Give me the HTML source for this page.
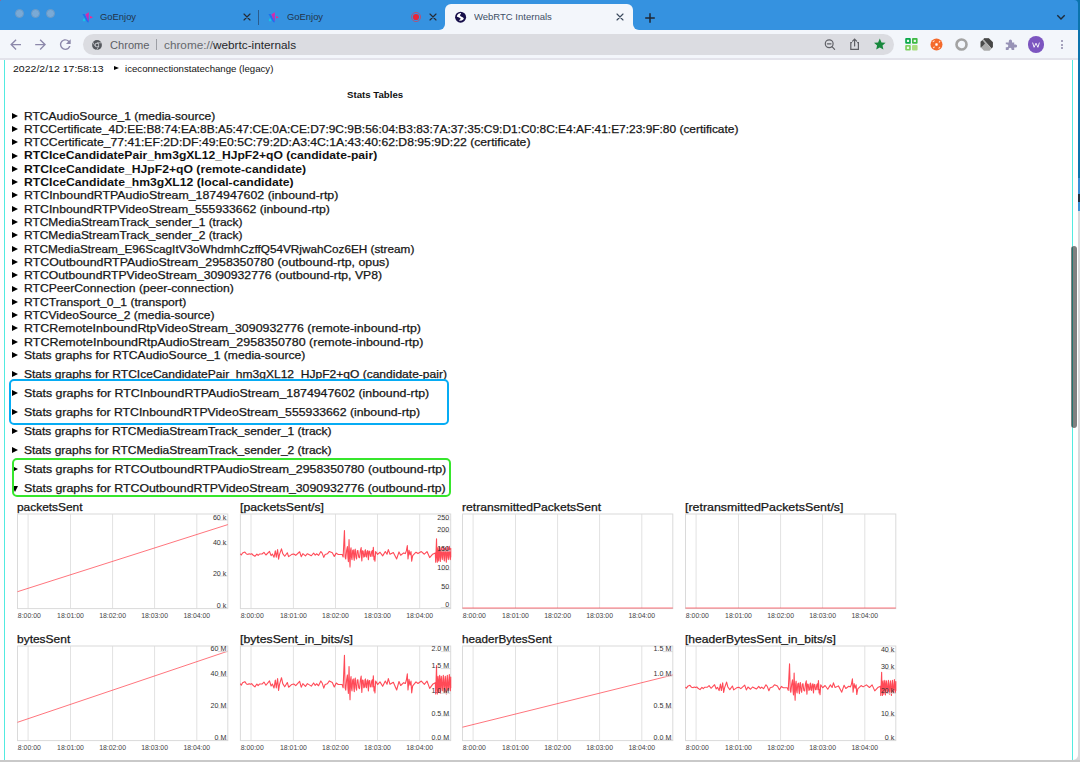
<!DOCTYPE html><html><head><meta charset="utf-8"><style>
html,body{margin:0;padding:0;width:1080px;height:762px;overflow:hidden;background:#dcdcdc;font-family:'Liberation Sans', sans-serif;}
#win{position:absolute;left:0;top:0;width:1078px;height:760px;overflow:hidden;background:transparent;border-radius:0 4px 5px 0;}
.ls{-webkit-text-stroke:0.25px #222;}
.tri{position:absolute;width:0;height:0;border-top:3.5px solid transparent;border-bottom:3.5px solid transparent;border-left:6.3px solid #000;}
</style></head><body>
<div style="position:absolute;left:1068px;top:0;width:12px;height:178px;background:#0b74ad"></div>
<div style="position:absolute;left:1076px;top:178px;width:4px;height:33px;background:#3a8ed6"></div>
<div style="position:absolute;left:1078px;top:194px;width:2px;height:8px;background:#23303f"></div>
<div style="position:absolute;left:1076px;top:211px;width:4px;height:551px;background:#d9d9db"></div>
<div style="position:absolute;left:0;top:760px;width:1080px;height:2px;background:#c9c9c9"></div>
<div id="win">
<div style="position:absolute;left:0;top:40px;width:1078px;height:720px;background:#fff"></div>
<div style="position:absolute;left:0;top:0;width:1078px;height:30px;background:#3592e0"></div>
<div style="position:absolute;left:0;top:0;width:1px;height:1px;background:#8a6a9a"></div>
<div style="position:absolute;left:14.9px;top:9.3px;width:9px;height:9px;box-sizing:border-box;border:0.6px solid #6e9ac4;border-radius:50%;background:#7aaad6"></div>
<div style="position:absolute;left:30.5px;top:9.3px;width:9px;height:9px;box-sizing:border-box;border:0.6px solid #6e9ac4;border-radius:50%;background:#7aaad6"></div>
<div style="position:absolute;left:46.1px;top:9.3px;width:9px;height:9px;box-sizing:border-box;border:0.6px solid #6e9ac4;border-radius:50%;background:#7aaad6"></div>
<div style="position:absolute;left:445px;top:4px;width:188px;height:27px;background:#f3f6fb;border-radius:6px 6px 0 0"></div>
<div style="position:absolute;left:439px;top:24px;width:6px;height:6px;background:#f3f6fb"></div>
<div style="position:absolute;left:433px;top:18px;width:12px;height:12px;border-radius:50%;background:#3592e0;clip-path:inset(6px 0 0 6px)"></div>
<div style="position:absolute;left:633px;top:24px;width:6px;height:6px;background:#f3f6fb"></div>
<div style="position:absolute;left:633px;top:18px;width:12px;height:12px;border-radius:50%;background:#3592e0;clip-path:inset(6px 6px 0 0)"></div>
<svg style="position:absolute;left:81.5px;top:12px" width="12" height="11" viewBox="0 0 12 11"><defs><linearGradient id="gm81" x1="0" y1="0" x2="0" y2="1"><stop offset="0" stop-color="#ff1a9a"/><stop offset="1" stop-color="#6a4ae0"/></linearGradient></defs><path d="M0.4 1.9L2.6 1.9L7 10.2L5.2 10.2Z" fill="#1a73f0"/><path d="M1.4 6.6L2.6 6.6L3.4 8.4L2 9.4L0.8 8.6Z" fill="#12c8e8"/><path d="M3.4 2.4L6.8 0.2L6.8 10L5.4 8Z" fill="url(#gm81)"/><path d="M8 4L8 6.6L11 5.3Z" fill="#ff1f8a"/></svg>
<div class="" style="position:absolute;left:100.00px;top:11.82px;font-size:9.8px;line-height:9.8px;font-weight:400;color:#22324a;white-space:nowrap;transform:scaleX(0.96);transform-origin:0 0;">GoEnjoy</div>
<svg style="position:absolute;left:241.5px;top:12px" width="10" height="10" viewBox="-5 -5 10 10"><path d="M-3.0 -3.0L3.0 3.0M3.0 -3.0L-3.0 3.0" stroke="#262a33" stroke-width="1.15" stroke-linecap="round"/></svg>
<div style="position:absolute;left:258px;top:10px;width:1px;height:15px;background:#2a5c8e"></div>
<svg style="position:absolute;left:268px;top:12px" width="12" height="11" viewBox="0 0 12 11"><defs><linearGradient id="gm268" x1="0" y1="0" x2="0" y2="1"><stop offset="0" stop-color="#ff1a9a"/><stop offset="1" stop-color="#6a4ae0"/></linearGradient></defs><path d="M0.4 1.9L2.6 1.9L7 10.2L5.2 10.2Z" fill="#1a73f0"/><path d="M1.4 6.6L2.6 6.6L3.4 8.4L2 9.4L0.8 8.6Z" fill="#12c8e8"/><path d="M3.4 2.4L6.8 0.2L6.8 10L5.4 8Z" fill="url(#gm268)"/><path d="M8 4L8 6.6L11 5.3Z" fill="#ff1f8a"/></svg>
<div class="" style="position:absolute;left:287.00px;top:11.82px;font-size:9.8px;line-height:9.8px;font-weight:400;color:#22324a;white-space:nowrap;transform:scaleX(0.96);transform-origin:0 0;">GoEnjoy</div>
<svg style="position:absolute;left:410px;top:11px" width="12" height="12" viewBox="0 0 12 12"><circle cx="6" cy="6" r="4.6" fill="none" stroke="#e8364a" stroke-width="0.8" opacity=".8"/><circle cx="6" cy="6" r="3.1" fill="#e8263a"/></svg>
<svg style="position:absolute;left:428.2px;top:12px" width="10" height="10" viewBox="-5 -5 10 10"><path d="M-3.0 -3.0L3.0 3.0M3.0 -3.0L-3.0 3.0" stroke="#262a33" stroke-width="1.15" stroke-linecap="round"/></svg>
<svg style="position:absolute;left:453px;top:10px" width="15" height="14" viewBox="0 0 15 14"><circle cx="7.6" cy="7.2" r="5.5" fill="#170f4a"/><path d="M3.86 6.07C4.2 5.3 4.78 4.6 4.78 4.6C5.3 4 6.07 3.58 6.07 3.58L7.9 3.12L8.09 3.68L7.17 4.78L6.99 5.51L7.9 6.43L9.19 6.99L10.29 7.72L10.85 8.46L10.29 9.56L8.82 10.48L6.62 10.85L6.07 10.29L7.35 9.37L7.72 8.64L6.99 7.9L5.51 7.35L4.04 6.8Z" fill="#fff"/></svg>
<div class="" style="position:absolute;left:473.50px;top:11.82px;font-size:9.8px;line-height:9.8px;font-weight:400;color:#3d4f66;white-space:nowrap;transform:scaleX(0.97);transform-origin:0 0;">WebRTC Internals</div>
<svg style="position:absolute;left:615.2px;top:12px" width="10" height="10" viewBox="-5 -5 10 10"><path d="M-3.0 -3.0L3.0 3.0M3.0 -3.0L-3.0 3.0" stroke="#3b4a5e" stroke-width="1.15" stroke-linecap="round"/></svg>
<svg style="position:absolute;left:644px;top:11.5px" width="12" height="12" viewBox="0 0 12 12"><path d="M6 1.2V10.8M1.2 6H10.8" stroke="#1f2733" stroke-width="1.5"/></svg>
<svg style="position:absolute;left:1055px;top:12px" width="12" height="10" viewBox="0 0 12 10"><path d="M2.3 3.3L6 7L9.7 3.3" fill="none" stroke="#1f2a38" stroke-width="1.4"/></svg>
<div style="position:absolute;left:0;top:30px;width:1078px;height:28px;background:#f3f6fb"></div>
<div style="position:absolute;left:0;top:58px;width:1078px;height:2px;background:#e3e3eb"></div>
<svg style="position:absolute;left:0;top:30px" width="80" height="28"><g fill="#8c88aa"><path transform="translate(7.5,6.5) scale(0.675)" d="M20 11H7.83l5.59-5.59L12 4l-8 8 8 8 1.41-1.41L7.83 13H20v-2z"/><path transform="translate(32.5,6.5) scale(0.675)" d="M12 4l-1.41 1.41L16.17 11H4v2h12.17l-5.58 5.59L12 20l8-8z"/><path transform="translate(57.2,6.5) scale(0.675)" d="M17.65 6.35A7.958 7.958 0 0 0 12 4c-4.42 0-7.99 3.58-7.99 8s3.57 8 7.99 8c3.730 0 6.84-2.55 7.73-6h-2.08A5.990 5.990 0 0 1 12 18c-3.31 0-6-2.69-6-6s2.69-6 6-6c1.66 0 3.14.69 4.22 1.78L13 11h7V4l-2.35 2.35z"/></g></svg>
<div style="position:absolute;left:83.3px;top:33.8px;width:810.5px;height:21.4px;border-radius:10.7px;background:#dbdce1"></div>
<svg style="position:absolute;left:92px;top:39.6px" width="10" height="10" viewBox="0 0 10 10"><circle cx="5" cy="5" r="4.9" fill="#55585e"/><circle cx="5" cy="5" r="2.2" fill="#dbdce1"/><circle cx="5" cy="5" r="1.5" fill="#55585e"/><path d="M5 2.8H9.6M3.1 6.1L0.8 2.2M6.9 6.1L4.6 10" stroke="#dbdce1" stroke-width="0.7"/></svg>
<div class="" style="position:absolute;left:109.80px;top:40.18px;font-size:10.9px;line-height:10.9px;font-weight:400;color:#5d6066;white-space:nowrap;transform:scaleX(1.02);transform-origin:0 0;">Chrome</div>
<div style="position:absolute;left:155.6px;top:38.7px;width:1px;height:11.6px;background:#9c9ea4"></div>
<div class="" style="position:absolute;left:163.90px;top:40.18px;font-size:10.9px;line-height:10.9px;font-weight:400;color:#000;white-space:nowrap;transform:scaleX(1.08);transform-origin:0 0;"><span style="color:#65686e">chrome://</span><span style="color:#25272b">webrtc-internals</span></div>
<svg style="position:absolute;left:822px;top:37px" width="70" height="16" viewBox="0 0 70 16" fill="none" stroke="#5f6066" stroke-width="1.2" stroke-linecap="round"><circle cx="7.2" cy="6.8" r="3.9"/><path d="M10 9.7L12.6 12.3M5.4 6.8H9"/><path d="M29.6 5.6H28.8V12.4H36.4V5.6H35.6M32.6 2.2V9M30.6 4.2L32.6 2.2L34.6 4.2"/></svg>
<svg style="position:absolute;left:873px;top:38px" width="14" height="13" viewBox="0 0 14 13"><path d="M6.8 0.6L8.5 4.4L12.6 4.7L9.5 7.4L10.4 11.6L6.8 9.4L3.2 11.6L4.1 7.4L1 4.7L5.1 4.4Z" fill="#18883d"/></svg>
<svg style="position:absolute;left:904.5px;top:38px" width="13" height="13" viewBox="0 0 13 13"><rect x="0.2" y="0.1" width="5.6" height="5.6" rx="1" fill="#0aa84a"/><rect x="1.9" y="1.8" width="2.2" height="2.2" fill="#eef8f0"/><path d="M5.8 5.7L6.6 6.6L4.6 5.7Z" fill="#0aa84a"/><rect x="7" y="0.1" width="5.6" height="5.6" rx="1" fill="#3fba45"/><rect x="8.7" y="1.8" width="2.2" height="2.2" fill="#eef8ee"/><rect x="0.2" y="7" width="5.6" height="5.6" rx="1" fill="#7ccf5e"/><rect x="1.9" y="8.7" width="2.2" height="2.2" fill="#f2faee"/><rect x="7" y="7" width="5.6" height="5.6" rx="1" fill="#a9dd80"/></svg>
<svg style="position:absolute;left:929.7px;top:37.9px" width="13" height="13" viewBox="0 0 13 13"><circle cx="6.5" cy="6.5" r="6" fill="#f46a2c"/><rect x="5.3" y="5.3" width="2.4" height="2.4" rx="0.6" fill="#fff"/><path d="M3.2 3.6L4.2 2.9M9.8 3.3L9.2 4.1M3.5 9.6L4.3 9M9.7 9.4L8.9 10.1" stroke="#fde0d0" stroke-width="1.1" stroke-linecap="round"/></svg>
<svg style="position:absolute;left:954.5px;top:38px" width="13" height="13" viewBox="0 0 13 13"><circle cx="6.5" cy="6.5" r="5" fill="none" stroke="#a3a3a3" stroke-width="2.6"/></svg>
<svg style="position:absolute;left:979.5px;top:38px" width="14" height="13" viewBox="0 0 14 13"><path d="M4.2 0.3H8.8L12.9 4.2V9L9.6 12.7H4L0.6 9.2V3.8Z" fill="#ababab"/><path d="M4.2 0.3H8.8L12.9 4.2V9L11.4 10.6L3.2 1.4Z" fill="#474747"/><path d="M0.6 3.8L2.4 2.2L5 5.6L2.4 8.2L0.6 9.2Z" fill="#4a4a4a"/><path d="M3.2 1.4L11.4 10.6" stroke="#e6e6e6" stroke-width="0.6"/></svg>
<svg style="position:absolute;left:1005px;top:38.8px" width="13" height="12" viewBox="0 0 13 12"><path d="M0.8 3.4H3.8V2A1.6 1.6 0 0 1 7 2V3.4H9.2V5.4H10.6A1.5 1.5 0 0 1 10.6 8.4H9.2V11H6.6V10.2A1.5 1.5 0 0 0 3.6 10.2V11H0.8V8.2H1.8A1.5 1.5 0 0 0 1.8 5.2H0.8Z" fill="#9792b6"/></svg>
<div style="position:absolute;left:1027.5px;top:36px;width:16.8px;height:16.8px;border-radius:50%;background:#7c55c0"></div>
<svg style="position:absolute;left:1032px;top:41.5px" width="8" height="6" viewBox="0 0 8 6"><path d="M0.6 0.6L2.1 5.3L4 1.2L5.9 5.3L7.4 0.6" fill="none" stroke="#fff" stroke-width="0.9" stroke-linejoin="round"/></svg>
<div style="position:absolute;left:1060.5px;top:39.9px;width:2.1px;height:2.1px;border-radius:50%;background:#8c87a8"></div>
<div style="position:absolute;left:1060.5px;top:43.6px;width:2.1px;height:2.1px;border-radius:50%;background:#8c87a8"></div>
<div style="position:absolute;left:1060.5px;top:47.4px;width:2.1px;height:2.1px;border-radius:50%;background:#8c87a8"></div>
<div style="position:absolute;left:4px;top:60px;width:1.2px;height:700px;background:#52ebe0"></div>
<div style="position:absolute;left:1072px;top:60px;width:1.2px;height:700px;background:#52ebe0"></div>
<div style="position:absolute;left:1071px;top:246px;width:5.9px;height:182px;border-radius:3px;background:#808080"></div>
<div style="position:absolute;left:1072px;top:247px;width:1.2px;height:180px;background:#21756f"></div>
<div class="" style="position:absolute;left:13.00px;top:63.62px;font-size:9.8px;line-height:9.8px;font-weight:400;color:#111;white-space:nowrap;transform:scaleX(1.0734693877551018);transform-origin:0 0;">2022/2/12 17:58:13</div>
<div class="tri" style="left:114.2px;top:66.1px;border-top-width:2.8px;border-bottom-width:2.8px;border-left-width:5px"></div>
<div class="" style="position:absolute;left:125.00px;top:63.62px;font-size:9.8px;line-height:9.8px;font-weight:400;color:#111;white-space:nowrap;transform:scaleX(0.9836734693877551);transform-origin:0 0;">iceconnectionstatechange (legacy)</div>
<div class="" style="position:absolute;left:346.70px;top:90.78px;font-size:8.8px;line-height:8.8px;font-weight:700;color:#111;white-space:nowrap;transform:scaleX(1.0977272727272727);transform-origin:0 0;">Stats Tables</div>
<div class="tri" style="left:11.7px;top:112.60px"></div>
<div class="ls" style="position:absolute;left:24.00px;top:110.50px;font-size:11.0px;line-height:11.0px;font-weight:400;color:#111;white-space:nowrap;transform:scaleX(1.0950333422241665);transform-origin:0 0;">RTCAudioSource_1 (media-source)</div>
<div class="tri" style="left:11.7px;top:125.91px"></div>
<div class="ls" style="position:absolute;left:24.00px;top:123.80px;font-size:11.0px;line-height:11.0px;font-weight:400;color:#111;white-space:nowrap;transform:scaleX(1.084233596945089);transform-origin:0 0;">RTCCertificate_4D:EE:B8:74:EA:8B:A5:47:CE:0A:CE:D7:9C:9B:56:04:B3:83:7A:37:35:C9:D1:C0:8C:E4:AF:41:E7:23:9F:80 (certificate)</div>
<div class="tri" style="left:11.7px;top:139.21px"></div>
<div class="ls" style="position:absolute;left:24.00px;top:137.10px;font-size:11.0px;line-height:11.0px;font-weight:400;color:#111;white-space:nowrap;transform:scaleX(1.1078721384115322);transform-origin:0 0;">RTCCertificate_77:41:EF:2D:DF:49:E0:5C:79:2D:A3:4C:1A:43:40:62:D8:95:9D:22 (certificate)</div>
<div class="tri" style="left:11.7px;top:152.51px"></div>
<div class="" style="position:absolute;left:24.00px;top:150.41px;font-size:11.0px;line-height:11.0px;font-weight:700;color:#111;white-space:nowrap;transform:scaleX(1.101567509598136);transform-origin:0 0;">RTCIceCandidatePair_hm3gXL12_HJpF2+qO (candidate-pair)</div>
<div class="tri" style="left:11.7px;top:165.82px"></div>
<div class="" style="position:absolute;left:24.00px;top:163.72px;font-size:11.0px;line-height:11.0px;font-weight:700;color:#111;white-space:nowrap;transform:scaleX(1.107913669064748);transform-origin:0 0;">RTCIceCandidate_HJpF2+qO (remote-candidate)</div>
<div class="tri" style="left:11.7px;top:179.12px"></div>
<div class="" style="position:absolute;left:24.00px;top:177.02px;font-size:11.0px;line-height:11.0px;font-weight:700;color:#111;white-space:nowrap;transform:scaleX(1.1083057589411431);transform-origin:0 0;">RTCIceCandidate_hm3gXL12 (local-candidate)</div>
<div class="tri" style="left:11.7px;top:192.43px"></div>
<div class="ls" style="position:absolute;left:24.00px;top:190.33px;font-size:11.0px;line-height:11.0px;font-weight:400;color:#111;white-space:nowrap;transform:scaleX(1.1223359422034918);transform-origin:0 0;">RTCInboundRTPAudioStream_1874947602 (inbound-rtp)</div>
<div class="tri" style="left:11.7px;top:205.73px"></div>
<div class="ls" style="position:absolute;left:24.00px;top:203.63px;font-size:11.0px;line-height:11.0px;font-weight:400;color:#111;white-space:nowrap;transform:scaleX(1.1138904965680767);transform-origin:0 0;">RTCInboundRTPVideoStream_555933662 (inbound-rtp)</div>
<div class="tri" style="left:11.7px;top:219.04px"></div>
<div class="ls" style="position:absolute;left:24.00px;top:216.94px;font-size:11.0px;line-height:11.0px;font-weight:400;color:#111;white-space:nowrap;transform:scaleX(1.0863636363636362);transform-origin:0 0;">RTCMediaStreamTrack_sender_1 (track)</div>
<div class="tri" style="left:11.7px;top:232.34px"></div>
<div class="ls" style="position:absolute;left:24.00px;top:230.24px;font-size:11.0px;line-height:11.0px;font-weight:400;color:#111;white-space:nowrap;transform:scaleX(1.0863636363636362);transform-origin:0 0;">RTCMediaStreamTrack_sender_2 (track)</div>
<div class="tri" style="left:11.7px;top:245.65px"></div>
<div class="ls" style="position:absolute;left:24.00px;top:243.55px;font-size:11.0px;line-height:11.0px;font-weight:400;color:#111;white-space:nowrap;transform:scaleX(1.0687624331201877);transform-origin:0 0;">RTCMediaStream_E96ScagItV3oWhdmhCzffQ54VRjwahCoz6EH (stream)</div>
<div class="tri" style="left:11.7px;top:258.95px"></div>
<div class="ls" style="position:absolute;left:24.00px;top:256.85px;font-size:11.0px;line-height:11.0px;font-weight:400;color:#111;white-space:nowrap;transform:scaleX(1.123011380181462);transform-origin:0 0;">RTCOutboundRTPAudioStream_2958350780 (outbound-rtp, opus)</div>
<div class="tri" style="left:11.7px;top:272.26px"></div>
<div class="ls" style="position:absolute;left:24.00px;top:270.16px;font-size:11.0px;line-height:11.0px;font-weight:400;color:#111;white-space:nowrap;transform:scaleX(1.1087758102824061);transform-origin:0 0;">RTCOutboundRTPVideoStream_3090932776 (outbound-rtp, VP8)</div>
<div class="tri" style="left:11.7px;top:285.56px"></div>
<div class="ls" style="position:absolute;left:24.00px;top:283.46px;font-size:11.0px;line-height:11.0px;font-weight:400;color:#111;white-space:nowrap;transform:scaleX(1.101202028611632);transform-origin:0 0;">RTCPeerConnection (peer-connection)</div>
<div class="tri" style="left:11.7px;top:298.87px"></div>
<div class="ls" style="position:absolute;left:24.00px;top:296.76px;font-size:11.0px;line-height:11.0px;font-weight:400;color:#111;white-space:nowrap;transform:scaleX(1.101497051655004);transform-origin:0 0;">RTCTransport_0_1 (transport)</div>
<div class="tri" style="left:11.7px;top:312.18px"></div>
<div class="ls" style="position:absolute;left:24.00px;top:310.07px;font-size:11.0px;line-height:11.0px;font-weight:400;color:#111;white-space:nowrap;transform:scaleX(1.0922352040631609);transform-origin:0 0;">RTCVideoSource_2 (media-source)</div>
<div class="tri" style="left:11.7px;top:325.48px"></div>
<div class="ls" style="position:absolute;left:24.00px;top:323.38px;font-size:11.0px;line-height:11.0px;font-weight:400;color:#111;white-space:nowrap;transform:scaleX(1.1262825101407776);transform-origin:0 0;">RTCRemoteInboundRtpVideoStream_3090932776 (remote-inbound-rtp)</div>
<div class="tri" style="left:11.7px;top:338.79px"></div>
<div class="ls" style="position:absolute;left:24.00px;top:336.68px;font-size:11.0px;line-height:11.0px;font-weight:400;color:#111;white-space:nowrap;transform:scaleX(1.1325580681547038);transform-origin:0 0;">RTCRemoteInboundRtpAudioStream_2958350780 (remote-inbound-rtp)</div>
<div class="tri" style="left:11.7px;top:352.09px"></div>
<div class="ls" style="position:absolute;left:24.00px;top:349.99px;font-size:11.0px;line-height:11.0px;font-weight:400;color:#111;white-space:nowrap;transform:scaleX(1.1014661142426678);transform-origin:0 0;">Stats graphs for RTCAudioSource_1 (media-source)</div>
<div class="tri" style="left:11.7px;top:370.60px"></div>
<div class="ls" style="position:absolute;left:24.00px;top:368.50px;font-size:11.0px;line-height:11.0px;font-weight:400;color:#111;white-space:nowrap;transform:scaleX(1.0941625383363853);transform-origin:0 0;">Stats graphs for RTCIceCandidatePair_hm3gXL12_HJpF2+qO (candidate-pair)</div>
<div class="tri" style="left:11.7px;top:389.60px"></div>
<div class="ls" style="position:absolute;left:24.00px;top:387.50px;font-size:11.0px;line-height:11.0px;font-weight:400;color:#111;white-space:nowrap;transform:scaleX(1.1228962502067665);transform-origin:0 0;">Stats graphs for RTCInboundRTPAudioStream_1874947602 (inbound-rtp)</div>
<div class="tri" style="left:11.7px;top:409.10px"></div>
<div class="ls" style="position:absolute;left:24.00px;top:407.00px;font-size:11.0px;line-height:11.0px;font-weight:400;color:#111;white-space:nowrap;transform:scaleX(1.1149143575713625);transform-origin:0 0;">Stats graphs for RTCInboundRTPVideoStream_555933662 (inbound-rtp)</div>
<div class="tri" style="left:11.7px;top:428.10px"></div>
<div class="ls" style="position:absolute;left:24.00px;top:426.00px;font-size:11.0px;line-height:11.0px;font-weight:400;color:#111;white-space:nowrap;transform:scaleX(1.0914305593056894);transform-origin:0 0;">Stats graphs for RTCMediaStreamTrack_sender_1 (track)</div>
<div class="tri" style="left:11.7px;top:447.00px"></div>
<div class="ls" style="position:absolute;left:24.00px;top:444.90px;font-size:11.0px;line-height:11.0px;font-weight:400;color:#111;white-space:nowrap;transform:scaleX(1.0914305593056894);transform-origin:0 0;">Stats graphs for RTCMediaStreamTrack_sender_2 (track)</div>
<div class="tri" style="left:11.7px;top:465.90px"></div>
<div class="ls" style="position:absolute;left:24.00px;top:463.80px;font-size:11.0px;line-height:11.0px;font-weight:400;color:#111;white-space:nowrap;transform:scaleX(1.122593200863679);transform-origin:0 0;">Stats graphs for RTCOutboundRTPAudioStream_2958350780 (outbound-rtp)</div>
<div style="position:absolute;left:11.5px;top:485.50px;width:0;height:0;border-left:3.3px solid transparent;border-right:3.3px solid transparent;border-top:6.5px solid #000"></div>
<div class="ls" style="position:absolute;left:24.00px;top:482.70px;font-size:11.0px;line-height:11.0px;font-weight:400;color:#111;white-space:nowrap;transform:scaleX(1.119465835965836);transform-origin:0 0;">Stats graphs for RTCOutboundRTPVideoStream_3090932776 (outbound-rtp)</div>
<div style="position:absolute;left:9px;top:378.8px;width:439.5px;height:46.2px;box-sizing:border-box;border:2.8px solid #06acf4;border-radius:5px"></div>
<div style="position:absolute;left:12px;top:457.7px;width:438.8px;height:39.4px;box-sizing:border-box;border:2.6px solid #36e62c;border-radius:5px"></div>
<div class="ls" style="position:absolute;left:17.00px;top:501.50px;font-size:11px;line-height:11px;font-weight:400;color:#111;white-space:nowrap;transform:scaleX(1.0819999999999999);transform-origin:0 0;">packetsSent</div><svg style="position:absolute;left:15px;top:512px" width="216" height="110"><g transform="translate(2.50,2.00)"><line x1="10.6" y1="0" x2="10.6" y2="94.6" stroke="#e2e2e2" stroke-width="1"/><line x1="53.0" y1="0" x2="53.0" y2="94.6" stroke="#e2e2e2" stroke-width="1"/><line x1="95.1" y1="0" x2="95.1" y2="94.6" stroke="#e2e2e2" stroke-width="1"/><line x1="137.1" y1="0" x2="137.1" y2="94.6" stroke="#e2e2e2" stroke-width="1"/><line x1="179.3" y1="0" x2="179.3" y2="94.6" stroke="#e2e2e2" stroke-width="1"/><rect x="0" y="0" width="210.3" height="94.6" fill="none" stroke="#dadada" stroke-width="1"/><clipPath id="c17_514"><rect x="0" y="0" width="60" height="114.6"/></clipPath><text x="9.90" y="104.39999999999999" font-size="6.9" fill="#444" text-anchor="middle" font-family="Liberation Sans" clip-path="url(#c17_514)">18:00:00</text><text x="53.0" y="104.39999999999999" font-size="6.9" fill="#444" text-anchor="middle" font-family="Liberation Sans">18:01:00</text><text x="95.1" y="104.39999999999999" font-size="6.9" fill="#444" text-anchor="middle" font-family="Liberation Sans">18:02:00</text><text x="137.1" y="104.39999999999999" font-size="6.9" fill="#444" text-anchor="middle" font-family="Liberation Sans">18:03:00</text><text x="179.3" y="104.39999999999999" font-size="6.9" fill="#444" text-anchor="middle" font-family="Liberation Sans">18:04:00</text><line x1="0" y1="77.70000000000005" x2="210.3" y2="10.600000000000023" stroke="#ff3a46" stroke-opacity=".7" stroke-width="1"/><line x1="200.3" y1="6.1" x2="210.3" y2="6.1" stroke="#d9d9d9" stroke-width="1"/><text x="208.8" y="5.9" font-size="7.1" fill="#333" text-anchor="end" font-family="Liberation Sans">60 k</text><line x1="200.3" y1="30.700000000000003" x2="210.3" y2="30.700000000000003" stroke="#d9d9d9" stroke-width="1"/><text x="208.8" y="30.5" font-size="7.1" fill="#333" text-anchor="end" font-family="Liberation Sans">40 k</text><line x1="200.3" y1="62.0" x2="210.3" y2="62.0" stroke="#d9d9d9" stroke-width="1"/><text x="208.8" y="61.8" font-size="7.1" fill="#333" text-anchor="end" font-family="Liberation Sans">20 k</text><line x1="200.3" y1="94.0" x2="210.3" y2="94.0" stroke="#d9d9d9" stroke-width="1"/><text x="208.8" y="93.80000000000001" font-size="7.1" fill="#333" text-anchor="end" font-family="Liberation Sans">0 k</text></g></svg>
<div class="ls" style="position:absolute;left:239.90px;top:501.50px;font-size:11px;line-height:11px;font-weight:400;color:#111;white-space:nowrap;transform:scaleX(1.1173636363636363);transform-origin:0 0;">[packetsSent/s]</div><svg style="position:absolute;left:238px;top:512px" width="216" height="110"><g transform="translate(2.40,2.00)"><line x1="10.6" y1="0" x2="10.6" y2="94.6" stroke="#e2e2e2" stroke-width="1"/><line x1="53.0" y1="0" x2="53.0" y2="94.6" stroke="#e2e2e2" stroke-width="1"/><line x1="95.1" y1="0" x2="95.1" y2="94.6" stroke="#e2e2e2" stroke-width="1"/><line x1="137.1" y1="0" x2="137.1" y2="94.6" stroke="#e2e2e2" stroke-width="1"/><line x1="179.3" y1="0" x2="179.3" y2="94.6" stroke="#e2e2e2" stroke-width="1"/><rect x="0" y="0" width="210.3" height="94.6" fill="none" stroke="#dadada" stroke-width="1"/><clipPath id="c240_514"><rect x="0" y="0" width="60" height="114.6"/></clipPath><text x="9.90" y="104.39999999999999" font-size="6.9" fill="#444" text-anchor="middle" font-family="Liberation Sans" clip-path="url(#c240_514)">18:00:00</text><text x="53.0" y="104.39999999999999" font-size="6.9" fill="#444" text-anchor="middle" font-family="Liberation Sans">18:01:00</text><text x="95.1" y="104.39999999999999" font-size="6.9" fill="#444" text-anchor="middle" font-family="Liberation Sans">18:02:00</text><text x="137.1" y="104.39999999999999" font-size="6.9" fill="#444" text-anchor="middle" font-family="Liberation Sans">18:03:00</text><text x="179.3" y="104.39999999999999" font-size="6.9" fill="#444" text-anchor="middle" font-family="Liberation Sans">18:04:00</text><polyline points="0.00,39.69 0.90,40.99 2.19,39.05 4.46,38.07 6.08,40.02 7.70,40.34 8.67,39.69 9.97,40.21 11.27,39.69 12.56,40.99 14.51,42.29 16.45,40.02 17.75,41.31 19.04,40.02 21.63,40.02 23.58,38.40 25.52,40.99 29.09,37.43 30.71,41.64 32.00,40.02 33.62,43.26 34.92,36.78 35.89,43.26 37.19,35.48 38.16,45.20 39.13,40.34 41.08,34.83 42.37,39.69 44.32,42.29 46.91,38.72 48.21,42.61 51.45,40.34 53.39,40.02 55.34,41.31 59.22,37.75 60.84,42.61 62.46,39.69 65.06,41.96 67.00,39.69 70.91,41.74 73.21,39.12 74.85,41.08 76.16,39.77 78.13,41.41 80.43,37.47 81.74,39.12 83.38,43.38 84.69,40.43 86.99,39.77 88.96,37.47 91.91,38.79 93.88,42.40 95.85,39.12 97.82,40.43 101.75,40.43 102.74,43.05 104.05,16.48 104.70,43.10 105.36,45.02 106.18,36.70 107.00,32.55 107.50,43.10 107.99,47.65 108.31,36.70 108.64,25.66 109.13,43.10 109.63,52.89 110.12,36.70 110.61,33.87 111.10,43.10 111.59,45.68 112.25,36.70 112.91,35.83 113.40,43.10 113.89,46.33 114.38,36.70 114.88,35.18 115.53,43.10 116.19,45.02 116.84,36.70 117.50,36.49 118.32,43.10 119.14,43.71 119.96,36.70 120.78,33.54 121.11,43.10 121.44,46.99 122.09,36.70 122.75,37.15 123.41,43.10 124.06,42.40 124.56,36.70 125.05,35.83 125.54,42.30 126.03,43.05 126.69,37.50 127.34,36.49 127.67,42.30 128.00,45.68 128.66,37.50 129.31,37.15 129.97,42.30 130.62,42.40 131.28,37.50 131.94,36.49 132.43,42.30 132.92,33.21 133.25,37.50 133.58,45.68 134.07,42.30 134.56,47.32 135.22,37.50 135.87,38.46 137.19,40.43 139.60,38.23 142.27,41.90 144.93,37.57 146.60,40.23 147.93,35.57 149.60,40.23 152.93,38.57 156.27,44.90 158.60,37.90 160.27,41.23 163.27,38.90 164.93,39.57 165.93,36.90 166.93,31.57 167.60,44.90 168.60,36.23 169.60,40.90 170.60,37.57 171.27,47.23 172.27,41.57 175.60,38.23 177.60,39.57 180.93,37.57 183.93,40.23 186.60,37.57 189.27,43.57 192.27,40.23 194.93,38.90 195.27,48.23 196.13,24.90 196.53,43.10 196.93,48.23 197.26,36.70 197.60,33.57 197.94,43.10 198.27,46.90 198.77,36.70 199.27,32.90 199.60,43.10 199.93,47.57 200.43,36.70 200.93,33.57 201.43,43.10 201.93,45.57 202.43,36.70 202.93,32.90 203.43,43.10 203.93,46.90 204.43,36.70 204.93,33.57 205.43,43.10 205.93,48.23 206.43,36.70 206.93,32.90 207.43,43.10 207.93,45.57 208.43,36.70 208.93,32.23 209.43,43.10 209.93,45.57 210.26,36.70 210.30,34.23 210.30,43.10 210.30,36.23" fill="none" stroke="#ff2a3a" stroke-opacity=".85" stroke-width="1.1" stroke-linejoin="round"/><line x1="200.3" y1="5.800000000000001" x2="210.3" y2="5.800000000000001" stroke="#d9d9d9" stroke-width="1"/><text x="208.8" y="5.6" font-size="7.1" fill="#333" text-anchor="end" font-family="Liberation Sans">250</text><line x1="200.3" y1="18.0" x2="210.3" y2="18.0" stroke="#d9d9d9" stroke-width="1"/><text x="208.8" y="17.8" font-size="7.1" fill="#333" text-anchor="end" font-family="Liberation Sans">200</text><line x1="200.3" y1="36.9" x2="210.3" y2="36.9" stroke="#d9d9d9" stroke-width="1"/><text x="208.8" y="36.699999999999996" font-size="7.1" fill="#333" text-anchor="end" font-family="Liberation Sans">150</text><line x1="200.3" y1="55.800000000000004" x2="210.3" y2="55.800000000000004" stroke="#d9d9d9" stroke-width="1"/><text x="208.8" y="55.6" font-size="7.1" fill="#333" text-anchor="end" font-family="Liberation Sans">100</text><line x1="200.3" y1="74.69999999999999" x2="210.3" y2="74.69999999999999" stroke="#d9d9d9" stroke-width="1"/><text x="208.8" y="74.5" font-size="7.1" fill="#333" text-anchor="end" font-family="Liberation Sans">50</text><line x1="200.3" y1="93.6" x2="210.3" y2="93.6" stroke="#d9d9d9" stroke-width="1"/><text x="208.8" y="93.4" font-size="7.1" fill="#333" text-anchor="end" font-family="Liberation Sans">0</text></g></svg>
<div class="ls" style="position:absolute;left:462.00px;top:501.50px;font-size:11px;line-height:11px;font-weight:400;color:#111;white-space:nowrap;transform:scaleX(1.1045454545454545);transform-origin:0 0;">retransmittedPacketsSent</div><svg style="position:absolute;left:460px;top:512px" width="216" height="110"><g transform="translate(2.50,2.00)"><line x1="10.6" y1="0" x2="10.6" y2="94.6" stroke="#e2e2e2" stroke-width="1"/><line x1="53.0" y1="0" x2="53.0" y2="94.6" stroke="#e2e2e2" stroke-width="1"/><line x1="95.1" y1="0" x2="95.1" y2="94.6" stroke="#e2e2e2" stroke-width="1"/><line x1="137.1" y1="0" x2="137.1" y2="94.6" stroke="#e2e2e2" stroke-width="1"/><line x1="179.3" y1="0" x2="179.3" y2="94.6" stroke="#e2e2e2" stroke-width="1"/><rect x="0" y="0" width="210.3" height="94.6" fill="none" stroke="#dadada" stroke-width="1"/><clipPath id="c462_514"><rect x="0" y="0" width="60" height="114.6"/></clipPath><text x="9.90" y="104.39999999999999" font-size="6.9" fill="#444" text-anchor="middle" font-family="Liberation Sans" clip-path="url(#c462_514)">18:00:00</text><text x="53.0" y="104.39999999999999" font-size="6.9" fill="#444" text-anchor="middle" font-family="Liberation Sans">18:01:00</text><text x="95.1" y="104.39999999999999" font-size="6.9" fill="#444" text-anchor="middle" font-family="Liberation Sans">18:02:00</text><text x="137.1" y="104.39999999999999" font-size="6.9" fill="#444" text-anchor="middle" font-family="Liberation Sans">18:03:00</text><text x="179.3" y="104.39999999999999" font-size="6.9" fill="#444" text-anchor="middle" font-family="Liberation Sans">18:04:00</text><line x1="0" y1="94" x2="210.3" y2="94" stroke="#ff3a46" stroke-opacity=".7" stroke-width="1"/></g></svg>
<div class="ls" style="position:absolute;left:685.00px;top:501.50px;font-size:11px;line-height:11px;font-weight:400;color:#111;white-space:nowrap;transform:scaleX(1.1270909090909091);transform-origin:0 0;">[retransmittedPacketsSent/s]</div><svg style="position:absolute;left:683px;top:512px" width="216" height="110"><g transform="translate(2.50,2.00)"><line x1="10.6" y1="0" x2="10.6" y2="94.6" stroke="#e2e2e2" stroke-width="1"/><line x1="53.0" y1="0" x2="53.0" y2="94.6" stroke="#e2e2e2" stroke-width="1"/><line x1="95.1" y1="0" x2="95.1" y2="94.6" stroke="#e2e2e2" stroke-width="1"/><line x1="137.1" y1="0" x2="137.1" y2="94.6" stroke="#e2e2e2" stroke-width="1"/><line x1="179.3" y1="0" x2="179.3" y2="94.6" stroke="#e2e2e2" stroke-width="1"/><rect x="0" y="0" width="210.3" height="94.6" fill="none" stroke="#dadada" stroke-width="1"/><clipPath id="c685_514"><rect x="0" y="0" width="60" height="114.6"/></clipPath><text x="9.90" y="104.39999999999999" font-size="6.9" fill="#444" text-anchor="middle" font-family="Liberation Sans" clip-path="url(#c685_514)">18:00:00</text><text x="53.0" y="104.39999999999999" font-size="6.9" fill="#444" text-anchor="middle" font-family="Liberation Sans">18:01:00</text><text x="95.1" y="104.39999999999999" font-size="6.9" fill="#444" text-anchor="middle" font-family="Liberation Sans">18:02:00</text><text x="137.1" y="104.39999999999999" font-size="6.9" fill="#444" text-anchor="middle" font-family="Liberation Sans">18:03:00</text><text x="179.3" y="104.39999999999999" font-size="6.9" fill="#444" text-anchor="middle" font-family="Liberation Sans">18:04:00</text><line x1="0" y1="94" x2="210.3" y2="94" stroke="#ff3a46" stroke-opacity=".7" stroke-width="1"/></g></svg>
<div class="ls" style="position:absolute;left:17.00px;top:633.50px;font-size:11px;line-height:11px;font-weight:400;color:#111;white-space:nowrap;transform:scaleX(1.088090909090909);transform-origin:0 0;">bytesSent</div><svg style="position:absolute;left:15px;top:644px" width="216" height="110"><g transform="translate(2.50,2.00)"><line x1="10.6" y1="0" x2="10.6" y2="94.6" stroke="#e2e2e2" stroke-width="1"/><line x1="53.0" y1="0" x2="53.0" y2="94.6" stroke="#e2e2e2" stroke-width="1"/><line x1="95.1" y1="0" x2="95.1" y2="94.6" stroke="#e2e2e2" stroke-width="1"/><line x1="137.1" y1="0" x2="137.1" y2="94.6" stroke="#e2e2e2" stroke-width="1"/><line x1="179.3" y1="0" x2="179.3" y2="94.6" stroke="#e2e2e2" stroke-width="1"/><rect x="0" y="0" width="210.3" height="94.6" fill="none" stroke="#dadada" stroke-width="1"/><clipPath id="c17_646"><rect x="0" y="0" width="60" height="114.6"/></clipPath><text x="9.90" y="104.39999999999999" font-size="6.9" fill="#444" text-anchor="middle" font-family="Liberation Sans" clip-path="url(#c17_646)">18:00:00</text><text x="53.0" y="104.39999999999999" font-size="6.9" fill="#444" text-anchor="middle" font-family="Liberation Sans">18:01:00</text><text x="95.1" y="104.39999999999999" font-size="6.9" fill="#444" text-anchor="middle" font-family="Liberation Sans">18:02:00</text><text x="137.1" y="104.39999999999999" font-size="6.9" fill="#444" text-anchor="middle" font-family="Liberation Sans">18:03:00</text><text x="179.3" y="104.39999999999999" font-size="6.9" fill="#444" text-anchor="middle" font-family="Liberation Sans">18:04:00</text><line x1="0" y1="76.29999999999995" x2="210.3" y2="5.2000000000000455" stroke="#ff3a46" stroke-opacity=".7" stroke-width="1"/><line x1="200.3" y1="5.6" x2="210.3" y2="5.6" stroke="#d9d9d9" stroke-width="1"/><text x="208.8" y="5.4" font-size="7.1" fill="#333" text-anchor="end" font-family="Liberation Sans">60 M</text><line x1="200.3" y1="30.5" x2="210.3" y2="30.5" stroke="#d9d9d9" stroke-width="1"/><text x="208.8" y="30.299999999999997" font-size="7.1" fill="#333" text-anchor="end" font-family="Liberation Sans">40 M</text><line x1="200.3" y1="62.0" x2="210.3" y2="62.0" stroke="#d9d9d9" stroke-width="1"/><text x="208.8" y="61.8" font-size="7.1" fill="#333" text-anchor="end" font-family="Liberation Sans">20 M</text><line x1="200.3" y1="93.8" x2="210.3" y2="93.8" stroke="#d9d9d9" stroke-width="1"/><text x="208.8" y="93.60000000000001" font-size="7.1" fill="#333" text-anchor="end" font-family="Liberation Sans">0 M</text></g></svg>
<div class="ls" style="position:absolute;left:239.90px;top:633.50px;font-size:11px;line-height:11px;font-weight:400;color:#111;white-space:nowrap;transform:scaleX(1.1132727272727274);transform-origin:0 0;">[bytesSent_in_bits/s]</div><svg style="position:absolute;left:238px;top:644px" width="216" height="110"><g transform="translate(2.40,2.00)"><line x1="10.6" y1="0" x2="10.6" y2="94.6" stroke="#e2e2e2" stroke-width="1"/><line x1="53.0" y1="0" x2="53.0" y2="94.6" stroke="#e2e2e2" stroke-width="1"/><line x1="95.1" y1="0" x2="95.1" y2="94.6" stroke="#e2e2e2" stroke-width="1"/><line x1="137.1" y1="0" x2="137.1" y2="94.6" stroke="#e2e2e2" stroke-width="1"/><line x1="179.3" y1="0" x2="179.3" y2="94.6" stroke="#e2e2e2" stroke-width="1"/><rect x="0" y="0" width="210.3" height="94.6" fill="none" stroke="#dadada" stroke-width="1"/><clipPath id="c240_646"><rect x="0" y="0" width="60" height="114.6"/></clipPath><text x="9.90" y="104.39999999999999" font-size="6.9" fill="#444" text-anchor="middle" font-family="Liberation Sans" clip-path="url(#c240_646)">18:00:00</text><text x="53.0" y="104.39999999999999" font-size="6.9" fill="#444" text-anchor="middle" font-family="Liberation Sans">18:01:00</text><text x="95.1" y="104.39999999999999" font-size="6.9" fill="#444" text-anchor="middle" font-family="Liberation Sans">18:02:00</text><text x="137.1" y="104.39999999999999" font-size="6.9" fill="#444" text-anchor="middle" font-family="Liberation Sans">18:03:00</text><text x="179.3" y="104.39999999999999" font-size="6.9" fill="#444" text-anchor="middle" font-family="Liberation Sans">18:04:00</text><polyline points="0.00,37.64 0.90,39.23 2.19,36.86 4.46,35.67 6.08,38.05 7.70,38.44 8.67,37.64 9.97,38.28 11.27,37.64 12.56,39.23 14.51,40.82 16.45,38.05 17.75,39.62 19.04,38.05 21.63,38.05 23.58,36.07 25.52,39.23 29.09,34.89 30.71,40.02 32.00,38.05 33.62,42.00 34.92,34.09 35.89,42.00 37.19,32.51 38.16,44.37 39.13,38.44 41.08,31.71 42.37,37.64 44.32,40.82 46.91,36.46 48.21,41.21 51.45,38.44 53.39,38.05 55.34,39.62 59.22,35.28 60.84,41.21 62.46,37.64 65.06,40.41 67.00,37.64 70.91,40.14 73.21,36.95 74.85,39.34 76.16,37.74 78.13,39.74 80.43,34.94 81.74,36.95 83.38,42.15 84.69,38.55 86.99,37.74 88.96,34.94 91.91,36.55 93.88,40.95 95.85,36.95 97.82,38.55 101.75,38.55 102.74,41.74 104.05,9.33 104.70,41.80 105.36,44.15 106.18,34.00 107.00,28.93 107.50,41.80 107.99,47.35 108.31,34.00 108.64,20.53 109.13,41.80 109.63,53.75 110.12,34.00 110.61,30.54 111.10,41.80 111.59,44.95 112.25,34.00 112.91,32.93 113.40,41.80 113.89,45.74 114.38,34.00 114.88,32.14 115.53,41.80 116.19,44.15 116.84,34.00 117.50,33.74 118.32,41.80 119.14,42.55 119.96,34.00 120.78,30.14 121.11,41.80 121.44,46.55 122.09,34.00 122.75,34.54 123.41,41.80 124.06,40.95 124.56,34.00 125.05,32.93 125.54,40.83 126.03,41.74 126.69,34.97 127.34,33.74 127.67,40.83 128.00,44.95 128.66,34.97 129.31,34.54 129.97,40.83 130.62,40.95 131.28,34.97 131.94,33.74 132.43,40.83 132.92,29.74 133.25,34.97 133.58,44.95 134.07,40.83 134.56,46.95 135.22,34.97 135.87,36.14 137.19,38.55 139.60,35.86 142.27,40.34 144.93,35.06 146.60,38.30 147.93,32.62 149.60,38.30 152.93,36.28 156.27,44.00 158.60,35.46 160.27,39.52 163.27,36.68 164.93,37.50 165.93,34.24 166.93,27.74 167.60,44.00 168.60,33.42 169.60,39.12 170.60,35.06 171.27,46.84 172.27,39.94 175.60,35.86 177.60,37.50 180.93,35.06 183.93,38.30 186.60,35.06 189.27,42.38 192.27,38.30 194.93,36.68 195.27,48.06 196.13,19.60 196.53,41.80 196.93,48.06 197.26,34.00 197.60,30.18 197.94,41.80 198.27,46.44 198.77,34.00 199.27,29.36 199.60,41.80 199.93,47.26 200.43,34.00 200.93,30.18 201.43,41.80 201.93,44.82 202.43,34.00 202.93,29.36 203.43,41.80 203.93,46.44 204.43,34.00 204.93,30.18 205.43,41.80 205.93,48.06 206.43,34.00 206.93,29.36 207.43,41.80 207.93,44.82 208.43,34.00 208.93,28.54 209.43,41.80 209.93,44.82 210.26,34.00 210.30,30.98 210.30,41.80 210.30,33.42" fill="none" stroke="#ff2a3a" stroke-opacity=".85" stroke-width="1.1" stroke-linejoin="round"/><line x1="200.3" y1="5.6" x2="210.3" y2="5.6" stroke="#d9d9d9" stroke-width="1"/><text x="208.8" y="5.4" font-size="7.1" fill="#333" text-anchor="end" font-family="Liberation Sans">2.0 M</text><line x1="200.3" y1="22.6" x2="210.3" y2="22.6" stroke="#d9d9d9" stroke-width="1"/><text x="208.8" y="22.4" font-size="7.1" fill="#333" text-anchor="end" font-family="Liberation Sans">1.5 M</text><line x1="200.3" y1="47.2" x2="210.3" y2="47.2" stroke="#d9d9d9" stroke-width="1"/><text x="208.8" y="47.0" font-size="7.1" fill="#333" text-anchor="end" font-family="Liberation Sans">1.0 M</text><line x1="200.3" y1="69.8" x2="210.3" y2="69.8" stroke="#d9d9d9" stroke-width="1"/><text x="208.8" y="69.60000000000001" font-size="7.1" fill="#333" text-anchor="end" font-family="Liberation Sans">0.5 M</text><line x1="200.3" y1="93.8" x2="210.3" y2="93.8" stroke="#d9d9d9" stroke-width="1"/><text x="208.8" y="93.60000000000001" font-size="7.1" fill="#333" text-anchor="end" font-family="Liberation Sans">0.0 M</text></g></svg>
<div class="ls" style="position:absolute;left:462.00px;top:633.50px;font-size:11px;line-height:11px;font-weight:400;color:#111;white-space:nowrap;transform:scaleX(1.062);transform-origin:0 0;">headerBytesSent</div><svg style="position:absolute;left:460px;top:644px" width="216" height="110"><g transform="translate(2.50,2.00)"><line x1="10.6" y1="0" x2="10.6" y2="94.6" stroke="#e2e2e2" stroke-width="1"/><line x1="53.0" y1="0" x2="53.0" y2="94.6" stroke="#e2e2e2" stroke-width="1"/><line x1="95.1" y1="0" x2="95.1" y2="94.6" stroke="#e2e2e2" stroke-width="1"/><line x1="137.1" y1="0" x2="137.1" y2="94.6" stroke="#e2e2e2" stroke-width="1"/><line x1="179.3" y1="0" x2="179.3" y2="94.6" stroke="#e2e2e2" stroke-width="1"/><rect x="0" y="0" width="210.3" height="94.6" fill="none" stroke="#dadada" stroke-width="1"/><clipPath id="c462_646"><rect x="0" y="0" width="60" height="114.6"/></clipPath><text x="9.90" y="104.39999999999999" font-size="6.9" fill="#444" text-anchor="middle" font-family="Liberation Sans" clip-path="url(#c462_646)">18:00:00</text><text x="53.0" y="104.39999999999999" font-size="6.9" fill="#444" text-anchor="middle" font-family="Liberation Sans">18:01:00</text><text x="95.1" y="104.39999999999999" font-size="6.9" fill="#444" text-anchor="middle" font-family="Liberation Sans">18:02:00</text><text x="137.1" y="104.39999999999999" font-size="6.9" fill="#444" text-anchor="middle" font-family="Liberation Sans">18:03:00</text><text x="179.3" y="104.39999999999999" font-size="6.9" fill="#444" text-anchor="middle" font-family="Liberation Sans">18:04:00</text><line x1="0" y1="81.20000000000005" x2="210.3" y2="29.0" stroke="#ff3a46" stroke-opacity=".7" stroke-width="1"/><line x1="200.3" y1="5.6" x2="210.3" y2="5.6" stroke="#d9d9d9" stroke-width="1"/><text x="208.8" y="5.4" font-size="7.1" fill="#333" text-anchor="end" font-family="Liberation Sans">1.5 M</text><line x1="200.3" y1="30.0" x2="210.3" y2="30.0" stroke="#d9d9d9" stroke-width="1"/><text x="208.8" y="29.799999999999997" font-size="7.1" fill="#333" text-anchor="end" font-family="Liberation Sans">1.0 M</text><line x1="200.3" y1="62.0" x2="210.3" y2="62.0" stroke="#d9d9d9" stroke-width="1"/><text x="208.8" y="61.8" font-size="7.1" fill="#333" text-anchor="end" font-family="Liberation Sans">0.5 M</text><line x1="200.3" y1="93.8" x2="210.3" y2="93.8" stroke="#d9d9d9" stroke-width="1"/><text x="208.8" y="93.60000000000001" font-size="7.1" fill="#333" text-anchor="end" font-family="Liberation Sans">0.0 M</text></g></svg>
<div class="ls" style="position:absolute;left:685.00px;top:633.50px;font-size:11px;line-height:11px;font-weight:400;color:#111;white-space:nowrap;transform:scaleX(1.1009090909090908);transform-origin:0 0;">[headerBytesSent_in_bits/s]</div><svg style="position:absolute;left:683px;top:644px" width="216" height="110"><g transform="translate(2.50,2.00)"><line x1="10.6" y1="0" x2="10.6" y2="94.6" stroke="#e2e2e2" stroke-width="1"/><line x1="53.0" y1="0" x2="53.0" y2="94.6" stroke="#e2e2e2" stroke-width="1"/><line x1="95.1" y1="0" x2="95.1" y2="94.6" stroke="#e2e2e2" stroke-width="1"/><line x1="137.1" y1="0" x2="137.1" y2="94.6" stroke="#e2e2e2" stroke-width="1"/><line x1="179.3" y1="0" x2="179.3" y2="94.6" stroke="#e2e2e2" stroke-width="1"/><rect x="0" y="0" width="210.3" height="94.6" fill="none" stroke="#dadada" stroke-width="1"/><clipPath id="c685_646"><rect x="0" y="0" width="60" height="114.6"/></clipPath><text x="9.90" y="104.39999999999999" font-size="6.9" fill="#444" text-anchor="middle" font-family="Liberation Sans" clip-path="url(#c685_646)">18:00:00</text><text x="53.0" y="104.39999999999999" font-size="6.9" fill="#444" text-anchor="middle" font-family="Liberation Sans">18:01:00</text><text x="95.1" y="104.39999999999999" font-size="6.9" fill="#444" text-anchor="middle" font-family="Liberation Sans">18:02:00</text><text x="137.1" y="104.39999999999999" font-size="6.9" fill="#444" text-anchor="middle" font-family="Liberation Sans">18:03:00</text><text x="179.3" y="104.39999999999999" font-size="6.9" fill="#444" text-anchor="middle" font-family="Liberation Sans">18:04:00</text><polyline points="0.00,40.99 0.90,42.29 2.19,40.35 4.46,39.37 6.08,41.32 7.70,41.64 8.67,40.99 9.97,41.51 11.27,40.99 12.56,42.29 14.51,43.59 16.45,41.32 17.75,42.61 19.04,41.32 21.63,41.32 23.58,39.70 25.52,42.29 29.09,38.73 30.71,42.94 32.00,41.32 33.62,44.56 34.92,38.08 35.89,44.56 37.19,36.78 38.16,46.50 39.13,41.64 41.08,36.13 42.37,40.99 44.32,43.59 46.91,40.02 48.21,43.91 51.45,41.64 53.39,41.32 55.34,42.61 59.22,39.05 60.84,43.91 62.46,40.99 65.06,43.26 67.00,40.99 70.91,43.04 73.21,40.42 74.85,42.38 76.16,41.07 78.13,42.71 80.43,38.77 81.74,40.42 83.38,44.68 84.69,41.73 86.99,41.07 88.96,38.77 91.91,40.09 93.88,43.70 95.85,40.42 97.82,41.73 101.75,41.73 102.74,44.35 104.05,17.78 104.70,44.40 105.36,46.32 106.18,38.00 107.00,33.85 107.50,44.40 107.99,48.95 108.31,38.00 108.64,26.96 109.13,44.40 109.63,54.19 110.12,38.00 110.61,35.17 111.10,44.40 111.59,46.98 112.25,38.00 112.91,37.13 113.40,44.40 113.89,47.63 114.38,38.00 114.88,36.48 115.53,44.40 116.19,46.32 116.84,38.00 117.50,37.79 118.32,44.40 119.14,45.01 119.96,38.00 120.78,34.84 121.11,44.40 121.44,48.29 122.09,38.00 122.75,38.45 123.41,44.40 124.06,43.70 124.56,38.00 125.05,37.13 125.54,43.60 126.03,44.35 126.69,38.80 127.34,37.79 127.67,43.60 128.00,46.98 128.66,38.80 129.31,38.45 129.97,43.60 130.62,43.70 131.28,38.80 131.94,37.79 132.43,43.60 132.92,34.51 133.25,38.80 133.58,46.98 134.07,43.60 134.56,48.62 135.22,38.80 135.87,39.76 137.19,41.73 139.60,39.53 142.27,43.20 144.93,38.87 146.60,41.53 147.93,36.87 149.60,41.53 152.93,39.87 156.27,46.20 158.60,39.20 160.27,42.53 163.27,40.20 164.93,40.87 165.93,38.20 166.93,32.87 167.60,46.20 168.60,37.53 169.60,42.20 170.60,38.87 171.27,48.53 172.27,42.87 175.60,39.53 177.60,40.87 180.93,38.87 183.93,41.53 186.60,38.87 189.27,44.87 192.27,41.53 194.93,40.20 195.27,49.53 196.13,26.20 196.53,44.40 196.93,49.53 197.26,38.00 197.60,34.87 197.94,44.40 198.27,48.20 198.77,38.00 199.27,34.20 199.60,44.40 199.93,48.87 200.43,38.00 200.93,34.87 201.43,44.40 201.93,46.87 202.43,38.00 202.93,34.20 203.43,44.40 203.93,48.20 204.43,38.00 204.93,34.87 205.43,44.40 205.93,49.53 206.43,38.00 206.93,34.20 207.43,44.40 207.93,46.87 208.43,38.00 208.93,33.53 209.43,44.40 209.93,46.87 210.26,38.00 210.30,35.53 210.30,44.40 210.30,37.53" fill="none" stroke="#ff2a3a" stroke-opacity=".85" stroke-width="1.1" stroke-linejoin="round"/><line x1="200.3" y1="6.0" x2="210.3" y2="6.0" stroke="#d9d9d9" stroke-width="1"/><text x="208.8" y="5.8" font-size="7.1" fill="#333" text-anchor="end" font-family="Liberation Sans">40 k</text><line x1="200.3" y1="23.200000000000003" x2="210.3" y2="23.200000000000003" stroke="#d9d9d9" stroke-width="1"/><text x="208.8" y="23.0" font-size="7.1" fill="#333" text-anchor="end" font-family="Liberation Sans">30 k</text><line x1="200.3" y1="47.2" x2="210.3" y2="47.2" stroke="#d9d9d9" stroke-width="1"/><text x="208.8" y="47.0" font-size="7.1" fill="#333" text-anchor="end" font-family="Liberation Sans">20 k</text><line x1="200.3" y1="70.0" x2="210.3" y2="70.0" stroke="#d9d9d9" stroke-width="1"/><text x="208.8" y="69.80000000000001" font-size="7.1" fill="#333" text-anchor="end" font-family="Liberation Sans">10 k</text><line x1="200.3" y1="93.8" x2="210.3" y2="93.8" stroke="#d9d9d9" stroke-width="1"/><text x="208.8" y="93.60000000000001" font-size="7.1" fill="#333" text-anchor="end" font-family="Liberation Sans">0 k</text></g></svg>
</div></body></html>
